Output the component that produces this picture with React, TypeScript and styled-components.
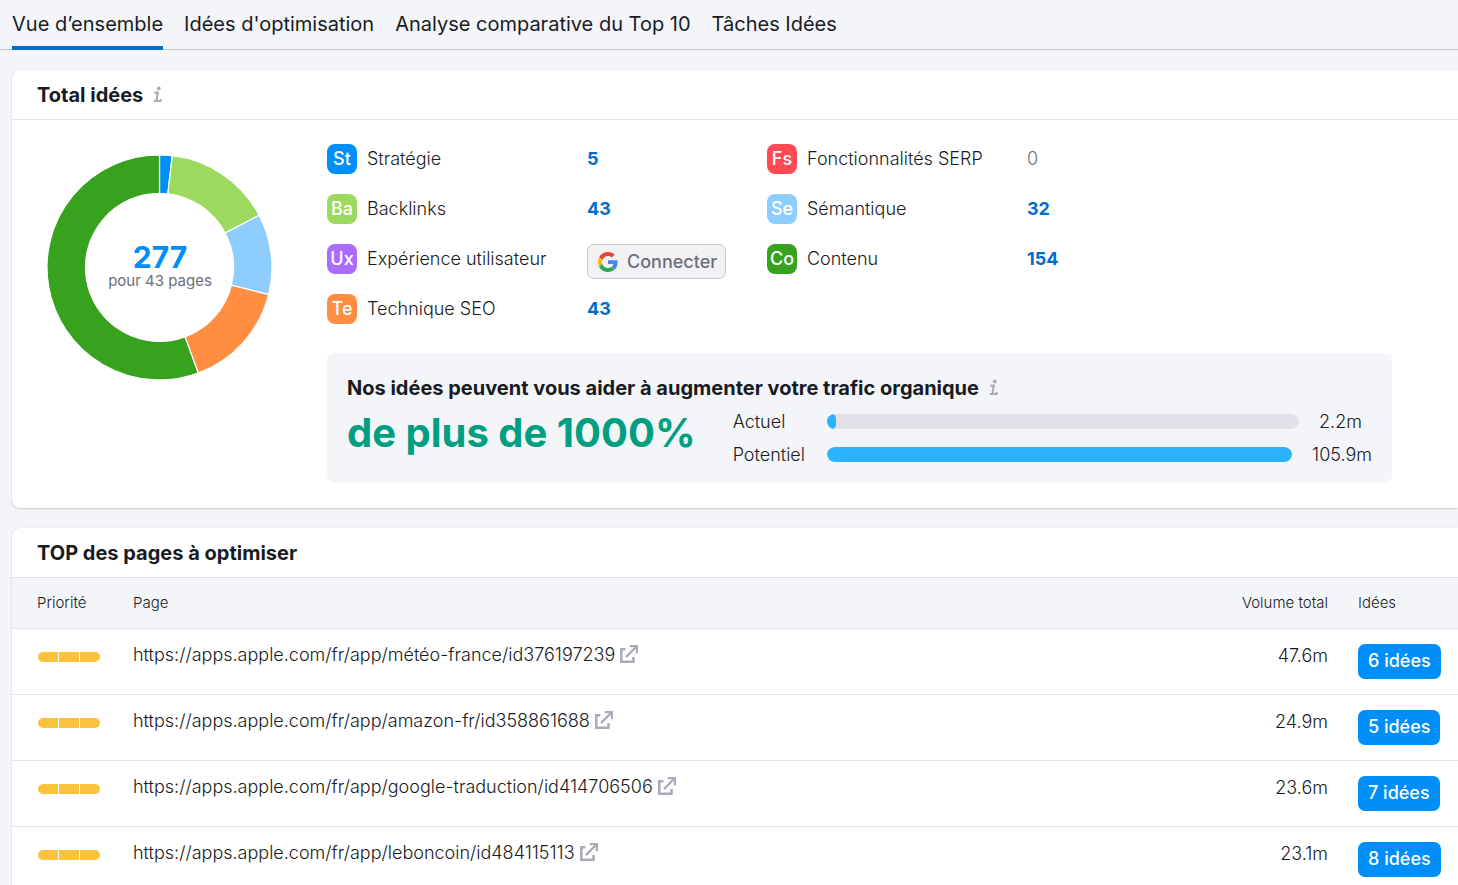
import React from "react";
import styled, { createGlobalStyle } from "styled-components";

const color = {
  page: "#f4f5f9",
  card: "#ffffff",
  text: "#191b23",
  muted: "#6c6e79",
  icon: "#a9abb6",
  line: "#e0e1e9",
  strongLine: "#c4c7cf",
  link: "#006dca",
  blue: "#008ff8",
  bar: "#2bb3ff",
  success: "#009f81",
  priority: "#fdc23c",
};

const GlobalStyle = createGlobalStyle`
  *, *::before, *::after { box-sizing: border-box; }
  body {
    margin: 0;
    background: ${color.page};
    color: ${color.text};
    font-family: Inter, "Liberation Sans", sans-serif;
    font-size: 18px;
    line-height: 24px;
  }
  button { font-family: inherit; cursor: pointer; }
  h2, h3, p, ul { margin: 0; padding: 0; }
`;

const Page = styled.div`
  display: flex;
  flex-direction: column;
  gap: 20px;
`;

const TabBar = styled.nav`
  display: flex;
  gap: 21px;
  height: 50px;
  padding-left: 12px;
  box-shadow: inset 0 -1px 0 ${color.strongLine};
`;

const Tab = styled.a<{ $active?: boolean }>`
  padding-top: 12px;
  border-bottom: 4px solid ${(p) => (p.$active ? color.link : "transparent")};
  color: ${color.text};
  font-size: 20px;
  text-decoration: none;
  white-space: nowrap;
`;

const Cards = styled.main`
  display: flex;
  flex-direction: column;
  gap: 20px;
  padding-left: 12px;
`;

const Card = styled.section`
  overflow: hidden;
  border-radius: 8px 0 0 8px;
  background: ${color.card};
  box-shadow: 0 0 1px rgba(25, 27, 35, 0.16), 0 1px 2px rgba(25, 27, 35, 0.16);
`;

const CardHeader = styled.header`
  display: flex;
  align-items: center;
  gap: 9px;
  height: 50px;
  padding: 0 25px;
  border-bottom: 1px solid ${color.line};
`;

const Heading = styled.h2`
  font-size: 20px;
  font-weight: 700;
`;

const Overview = styled.div`
  display: flex;
  align-items: flex-start;
  gap: 54px;
  padding: 24px 66px 25px 35px;
`;

const Chart = styled.div`
  display: grid;
  flex: none;
  margin-top: 10px;
  place-items: center;

  > * { grid-area: 1 / 1; }
`;

const ChartLabel = styled.div`
  display: flex;
  flex-direction: column;
  align-items: center;
  padding-bottom: 2px;
  color: ${color.muted};
  font-size: 15px;
  line-height: 18px;
`;

const ChartTotal = styled.strong`
  color: ${color.blue};
  font-size: 30px;
  font-weight: 700;
  line-height: 30px;
`;

const Details = styled.div`
  display: flex;
  flex: 1;
  flex-direction: column;
  gap: 29px;
  min-width: 0;
`;

const Categories = styled.div`
  display: flex;
`;

const CategoryList = styled.ul`
  display: flex;
  flex: 0 1 440px;
  flex-direction: column;
  gap: 20px;
  list-style: none;
`;

const Category = styled.li`
  display: flex;
  align-items: center;
  height: 30px;
`;

const Badge = styled.span<{ $color: string }>`
  display: grid;
  flex: none;
  width: 30px;
  height: 30px;
  margin-right: 10px;
  place-items: center;
  border-radius: 8px;
  background: ${(p) => p.$color};
  color: #ffffff;
  font-weight: 500;
`;

const CategoryName = styled.span`
  flex: none;
  width: 220px;
  font-weight: 300;
`;

const CountLink = styled.a`
  color: ${color.link};
  font-weight: 700;
  text-decoration: none;
`;

const EmptyCount = styled.span`
  color: ${color.muted};
  font-weight: 300;
`;

const ConnectButton = styled.button`
  display: flex;
  align-items: center;
  align-self: flex-start;
  flex: none;
  gap: 9px;
  height: 35px;
  padding: 0 8px 0 10px;
  border: 1px solid ${color.strongLine};
  border-radius: 7px;
  background: #f2f2f5;
  color: ${color.muted};
  font-size: 18px;
  font-weight: 500;
`;

const Forecast = styled.div`
  height: 130px;
  padding: 20px;
  border-radius: 8px;
  background: ${color.page};
`;

const ForecastTitle = styled.div`
  display: flex;
  align-items: center;
  gap: 9px;
  height: 30px;
`;

const ForecastBody = styled.div`
  display: flex;
  gap: 37px;
`;

const Growth = styled.p`
  color: ${color.success};
  font-size: 40px;
  font-weight: 700;
  line-height: 60px;
  white-space: nowrap;
`;

const Bars = styled.div`
  display: flex;
  flex: 1;
  flex-direction: column;
  gap: 9px;
  padding-top: 7px;
  font-weight: 300;
`;

const BarRow = styled.div`
  display: flex;
  align-items: center;
`;

const BarLabel = styled.span`
  width: 94px;
`;

const Track = styled.div`
  flex: 1;
  height: 15px;
  margin-bottom: 2px;
  overflow: hidden;
  border-radius: 8px;
  background: ${color.line};
`;

const Fill = styled.div`
  height: 100%;
  border-radius: 8px;
  background: ${color.bar};
`;

const BarValue = styled.span`
  min-width: 53px;
  margin-left: 20px;
`;

const PagesTable = styled.table`
  width: 100%;
  border-collapse: separate;
  border-spacing: 0;
  table-layout: fixed;
  font-weight: 300;
`;

const HeadCell = styled.th<{ $width?: number; $end?: boolean }>`
  width: ${(p) => (p.$width ? `${p.$width}px` : "auto")};
  height: 51px;
  padding: 0 15px;
  border-bottom: 1px solid ${color.line};
  background: ${color.page};
  font-size: 15px;
  font-weight: 300;
  text-align: ${(p) => (p.$end ? "right" : "left")};

  &:first-child { padding: 0 0 0 25px; }
`;

const Cell = styled.td<{ $end?: boolean }>`
  height: 66px;
  padding: 15px 15px 0;
  border-bottom: 1px solid ${color.line};
  text-align: ${(p) => (p.$end ? "right" : "left")};
  vertical-align: top;

  &:first-child { padding: 23px 0 0 26px; }
  &:nth-child(2) { padding-top: 14px; }
`;

const PageLink = styled.a`
  display: flex;
  align-items: center;
  gap: 5px;
  color: ${color.text};
  text-decoration: none;

  svg { margin-bottom: 2px; }
`;

const Priority = styled.div`
  display: flex;
  gap: 1px;
  width: 62px;
  height: 10px;
  overflow: hidden;
  border-radius: 5px;
`;

const PrioritySegment = styled.span`
  flex: 1;
  background: ${color.priority};
`;

const IdeasButton = styled.button`
  display: block;
  height: 35px;
  padding: 0 10px 2px;
  border: 0;
  border-radius: 7px;
  background: ${color.blue};
  color: #ffffff;
  font-size: 18px;
  font-weight: 500;
  white-space: nowrap;
`;

function InfoIcon() {
  return (
    <svg width="10" height="18" viewBox="0 0 10 18" fill="none" aria-hidden="true">
      <circle cx="6.8" cy="2.4" r="1.9" fill={color.icon} />
      <path d="M2.4 6.6H5.8L4.4 14.8M1.8 15H8.6V13" stroke={color.icon} strokeWidth="2.1" />
    </svg>
  );
}

function ExternalIcon() {
  return (
    <svg width="18" height="18" viewBox="0 0 18 18" fill="none" aria-hidden="true">
      <path d="M5.4 4.2H1.3V16.7H13.5V12" stroke={color.icon} strokeWidth="2.5" />
      <path d="M6.6 11.4L15.8 2.2" stroke={color.icon} strokeWidth="2.3" strokeLinecap="round" />
      <path d="M9.8 1.1H16.9V8.2" stroke={color.icon} strokeWidth="2.2" />
    </svg>
  );
}

function GoogleIcon() {
  return (
    <svg width="20" height="20" viewBox="0 0 48 48" aria-hidden="true">
      <path fill="#EA4335" d="M24 9.5c3.54 0 6.71 1.22 9.21 3.6l6.85-6.85C35.9 2.38 30.47 0 24 0 14.62 0 6.51 5.38 2.56 13.22l7.98 6.19C12.43 13.72 17.74 9.5 24 9.5z" />
      <path fill="#4285F4" d="M46.98 24.55c0-1.57-.15-3.09-.38-4.55H24v9.02h12.94c-.58 2.96-2.26 5.48-4.78 7.18l7.73 6c4.51-4.18 7.09-10.36 7.09-17.65z" />
      <path fill="#FBBC05" d="M10.53 28.59c-.48-1.45-.76-2.99-.76-4.59s.27-3.14.76-4.59l-7.98-6.19C.92 16.46 0 20.12 0 24c0 3.88.92 7.54 2.56 10.78l7.97-6.19z" />
      <path fill="#34A853" d="M24 48c6.48 0 11.93-2.13 15.89-5.81l-7.73-6c-2.15 1.45-4.92 2.3-8.16 2.3-6.26 0-11.57-4.22-13.47-9.91l-7.98 6.19C6.51 42.62 14.62 48 24 48z" />
    </svg>
  );
}

const slices = [
  { value: 5, fill: "#008ff8" },
  { value: 43, fill: "#9dd95f" },
  { value: 32, fill: "#8ecdff" },
  { value: 43, fill: "#ff8e43" },
  { value: 154, fill: "#36a21d" },
];
const totalIdeas = slices.reduce((sum, s) => sum + s.value, 0);

function Donut() {
  const outer = 112.5;
  const inner = 74;
  const point = (r: number, share: number) => {
    const angle = share * 2 * Math.PI;
    return `${(r * Math.sin(angle)).toFixed(3)} ${(-r * Math.cos(angle)).toFixed(3)}`;
  };
  let sum = 0;
  return (
    <svg width="226" height="226" viewBox="-112.5 -113.4 226 226" overflow="visible" aria-hidden="true">
      {slices.map((s) => {
        const from = sum / totalIdeas;
        sum += s.value;
        const to = sum / totalIdeas;
        const large = to - from > 0.5 ? 1 : 0;
        return (
          <path
            key={s.fill}
            fill={s.fill}
            stroke="#ffffff"
            strokeWidth="1.25"
            d={`M${point(outer, from)}A${outer} ${outer} 0 ${large} 1 ${point(outer, to)}L${point(inner, to)}A${inner} ${inner} 0 ${large} 0 ${point(inner, from)}Z`}
          />
        );
      })}
    </svg>
  );
}

type CategoryData = { code: string; name: string; fill: string; count: number | null };

const categoryColumns: CategoryData[][] = [
  [
    { code: "St", name: "Stratégie", fill: "#008ff8", count: 5 },
    { code: "Ba", name: "Backlinks", fill: "#9dd95f", count: 43 },
    { code: "Ux", name: "Expérience utilisateur", fill: "#ab6cfe", count: null },
    { code: "Te", name: "Technique SEO", fill: "#ff8e43", count: 43 },
  ],
  [
    { code: "Fs", name: "Fonctionnalités SERP", fill: "#ff4953", count: 0 },
    { code: "Se", name: "Sémantique", fill: "#8ecdff", count: 32 },
    { code: "Co", name: "Contenu", fill: "#36a21d", count: 154 },
  ],
];

function CategoryCount({ count }: { count: number | null }) {
  if (count === null) {
    return (
      <ConnectButton type="button">
        <GoogleIcon />
        Connecter
      </ConnectButton>
    );
  }
  if (count === 0) return <EmptyCount>0</EmptyCount>;
  return <CountLink href="#idees">{count}</CountLink>;
}

const forecast = [
  { label: "Actuel", value: "2.2m", share: 2 },
  { label: "Potentiel", value: "105.9m", share: 100 },
];

const tabs = ["Vue d’ensemble", "Idées d'optimisation", "Analyse comparative du Top 10", "Tâches Idées"];

const pages = [
  { url: "https://apps.apple.com/fr/app/météo-france/id376197239", volume: "47.6m", ideas: 6 },
  { url: "https://apps.apple.com/fr/app/amazon-fr/id358861688", volume: "24.9m", ideas: 5 },
  { url: "https://apps.apple.com/fr/app/google-traduction/id414706506", volume: "23.6m", ideas: 7 },
  { url: "https://apps.apple.com/fr/app/leboncoin/id484115113", volume: "23.1m", ideas: 8 },
];

export default function App() {
  return (
    <Page>
      <GlobalStyle />
      <TabBar>
        {tabs.map((tab, i) => (
          <Tab key={tab} href="#" $active={i === 0} aria-current={i === 0 ? "page" : undefined}>
            {tab}
          </Tab>
        ))}
      </TabBar>
      <Cards>
        <Card>
          <CardHeader>
            <Heading>Total idées</Heading>
            <InfoIcon />
          </CardHeader>
          <Overview>
            <Chart>
              <Donut />
              <ChartLabel>
                <ChartTotal>{totalIdeas}</ChartTotal>
                pour 43 pages
              </ChartLabel>
            </Chart>
            <Details>
              <Categories>
                {categoryColumns.map((column) => (
                  <CategoryList key={column[0].code}>
                    {column.map((c) => (
                      <Category key={c.code}>
                        <Badge $color={c.fill}>{c.code}</Badge>
                        <CategoryName>{c.name}</CategoryName>
                        <CategoryCount count={c.count} />
                      </Category>
                    ))}
                  </CategoryList>
                ))}
              </Categories>
              <Forecast>
                <ForecastTitle>
                  <Heading as="h3">Nos idées peuvent vous aider à augmenter votre trafic organique</Heading>
                  <InfoIcon />
                </ForecastTitle>
                <ForecastBody>
                  <Growth>de plus de 1000%</Growth>
                  <Bars>
                    {forecast.map((row) => (
                      <BarRow key={row.label}>
                        <BarLabel>{row.label}</BarLabel>
                        <Track>
                          <Fill style={{ width: `${row.share}%` }} />
                        </Track>
                        <BarValue>{row.value}</BarValue>
                      </BarRow>
                    ))}
                  </Bars>
                </ForecastBody>
              </Forecast>
            </Details>
          </Overview>
        </Card>
        <Card>
          <CardHeader>
            <Heading>TOP des pages à optimiser</Heading>
          </CardHeader>
          <PagesTable>
            <thead>
              <tr>
                <HeadCell scope="col" $width={106}>Priorité</HeadCell>
                <HeadCell scope="col">Page</HeadCell>
                <HeadCell scope="col" $width={150} $end>Volume total</HeadCell>
                <HeadCell scope="col" $width={115}>Idées</HeadCell>
              </tr>
            </thead>
            <tbody>
              {pages.map((page) => (
                <tr key={page.url}>
                  <Cell>
                    <Priority>
                      <PrioritySegment />
                      <PrioritySegment />
                      <PrioritySegment />
                    </Priority>
                  </Cell>
                  <Cell>
                    <PageLink href={page.url}>
                      {page.url}
                      <ExternalIcon />
                    </PageLink>
                  </Cell>
                  <Cell $end>{page.volume}</Cell>
                  <Cell>
                    <IdeasButton type="button">{page.ideas} idées</IdeasButton>
                  </Cell>
                </tr>
              ))}
            </tbody>
          </PagesTable>
        </Card>
      </Cards>
    </Page>
  );
}
